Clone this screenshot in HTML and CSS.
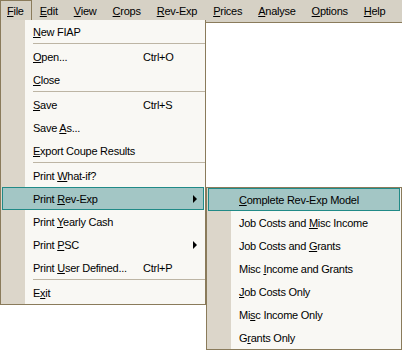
FILE: index.html
```html
<!DOCTYPE html>
<html lang="en">
<head>
    <meta charset="UTF-8">
    <title>FIAP - File menu</title>
    <link rel="stylesheet" href="styles.css">
</head>
<body>
    <div class="menubar">
        <span class="menu-title open"><u>F</u>ile</span>
        <span class="menu-title"><u>E</u>dit</span>
        <span class="menu-title"><u>V</u>iew</span>
        <span class="menu-title"><u>C</u>rops</span>
        <span class="menu-title"><u>R</u>ev-Exp</span>
        <span class="menu-title"><u>P</u>rices</span>
        <span class="menu-title"><u>A</u>nalyse</span>
        <span class="menu-title"><u>O</u>ptions</span>
        <span class="menu-title"><u>H</u>elp</span>
    </div>

    <div class="dropdown file-menu">
        <div class="item"><span class="label"><u>N</u>ew FIAP</span></div>
        <div class="sep"></div>
        <div class="item"><span class="label"><u>O</u>pen...</span><span class="key">Ctrl+O</span></div>
        <div class="item"><span class="label"><u>C</u>lose</span></div>
        <div class="sep"></div>
        <div class="item"><span class="label"><u>S</u>ave</span><span class="key">Ctrl+S</span></div>
        <div class="item"><span class="label">Save <u>A</u>s...</span></div>
        <div class="item"><span class="label"><u>E</u>xport Coupe Results</span></div>
        <div class="sep"></div>
        <div class="item"><span class="label">Print <u>W</u>hat-if?</span></div>
        <div class="item active"><span class="label">Print <u>R</u>ev-Exp</span><span class="arrow"></span></div>
        <div class="item"><span class="label">Print <u>Y</u>early Cash</span></div>
        <div class="item"><span class="label">Print <u>P</u>SC</span><span class="arrow"></span></div>
        <div class="item"><span class="label">Print <u>U</u>ser Defined...</span><span class="key">Ctrl+P</span></div>
        <div class="sep"></div>
        <div class="item"><span class="label">E<u>x</u>it</span></div>
    </div>

    <div class="dropdown sub-menu">
        <div class="item active"><span class="label"><u>C</u>omplete Rev-Exp Model</span></div>
        <div class="item"><span class="label">Job Costs and <u>M</u>isc Income</span></div>
        <div class="item"><span class="label">Job Costs and <u>G</u>rants</span></div>
        <div class="item"><span class="label">Misc <u>I</u>ncome and Grants</span></div>
        <div class="item"><span class="label"><u>J</u>ob Costs Only</span></div>
        <div class="item"><span class="label">Mi<u>s</u>c Income Only</span></div>
        <div class="item"><span class="label">G<u>r</u>ants Only</span></div>
    </div>
</body>
</html>
```

FILE: styles.css
```css
body {
    margin: 0;
    background: #ffffff;
    font-family: "Liberation Sans", Arial, sans-serif;
    font-size: 11px;
    letter-spacing: -0.25px;
    color: #000;
}

u {
    text-decoration: underline;
    text-underline-offset: 1px;
}

.menubar {
    display: flex;
    height: 22px;
    background: #d6d1c5;
    border-bottom: 1px solid #8a7b5b;
}

.menu-title {
    display: flex;
    align-items: center;
    flex: none;
    white-space: nowrap;
    height: 20px;
    padding: 0 7px 0 6px;
    border: 1px solid transparent;
    border-bottom: none;
    box-sizing: border-box;
    margin-right: 1px;
}

.menu-title.open {
    border-color: #8a7b5b;
}

.dropdown {
    position: absolute;
    box-sizing: border-box;
    background: linear-gradient(to right, #dcd6ca 0, #dcd6ca 24px, #f9f8f4 24px);
    border: 1px solid #8a7b5b;
}

.file-menu {
    left: 0;
    top: 20px;
    width: 206px;
    border-top: none;
}

.sub-menu {
    left: 206px;
    top: 187px;
    width: 196px;
}

.item {
    display: flex;
    align-items: center;
    height: 23px;
    padding-left: 32px;
    box-sizing: border-box;
    white-space: nowrap;
}

.item.active {
    margin: 0 1px;
    padding-left: 30px;
    background: #a3c6c5;
    border: 1px solid #218a87;
}

.label {
    flex: 0 0 110px;
}

.sub-menu .label {
    flex: 1;
}

.key {
    flex: none;
}

.arrow {
    margin-left: auto;
    margin-right: 8px;
    width: 0;
    height: 0;
    border-left: 4px solid #000;
    border-top: 4px solid transparent;
    border-bottom: 4px solid transparent;
}

.item.active .arrow {
    margin-right: 6px;
}

.sep {
    height: 2px;
    margin-left: 32px;
    box-sizing: border-box;
    border-top: 1px solid #bdb5a4;
}
```
